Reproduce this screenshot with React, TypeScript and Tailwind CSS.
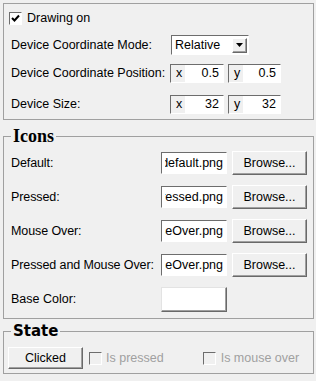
import { FC, ReactNode } from "react";

const sunken =
  "border border-t-[#6d6d6d] border-l-[#6d6d6d] border-b-white border-r-white";
const raised =
  "border border-t-white border-l-white border-b-[#696969] border-r-[#696969] shadow-[inset_-1px_-1px_0_#a0a0a0]";

const CheckBox: FC<{ checked?: boolean; disabled?: boolean }> = ({
  checked,
  disabled,
}) => (
  <div
    className={`w-[13px] h-[13px] flex items-center justify-center ${sunken} ${
      disabled ? "bg-[#f0f0f0]" : "bg-white"
    }`}
  >
    {checked && (
      <svg width="9" height="9" viewBox="0 0 9 9">
        <path d="M1 4 L3.5 6.5 L8 1.5" stroke="#000" strokeWidth="2" fill="none" />
      </svg>
    )}
  </div>
);

const CoordField: FC<{ axis: string; value: string; w: string }> = ({
  axis,
  value,
  w,
}) => (
  <div className={`${w} h-[19px] flex bg-white ${sunken}`}>
    <span className="bg-[#f0f0f0] pl-[5px] pr-[3px] leading-[17px]">{axis}</span>
    <span className="flex-1 text-right pr-[4px] leading-[17px]">{value}</span>
  </div>
);

const Button: FC<{ className?: string; children: ReactNode }> = ({
  className,
  children,
}) => (
  <div
    className={`flex items-center justify-center bg-[#f0f0f0] ${raised} ${className ?? ""}`}
  >
    {children}
  </div>
);

const FileRow: FC<{ label: string; file: string }> = ({ label, file }) => (
  <div className="h-[34px] flex items-center">
    <span className="w-[150px] shrink-0 whitespace-nowrap tracking-[-0.1px]">{label}</span>
    <div className={`w-[66px] h-[22px] shrink-0 bg-white flex justify-end items-center ${sunken}`}>
      <div className="w-[58px] mr-[3px] overflow-hidden flex justify-end whitespace-nowrap">
        <span className="shrink-0">{file}</span>
      </div>
    </div>
    <Button className="ml-[5px] w-[75px] h-[24px]">Browse...</Button>
  </div>
);

export default function App() {
  return (
    <div className="w-[316px] h-[381px] bg-[#f0f0f0] pt-[3px] pl-[3px] pr-[2px] text-[12.5px] text-black font-['Liberation_Sans',Arial,sans-serif]">
      <div className="h-[117px] border border-[#a0a0a0] pl-[7px] flex flex-col">
        <div className="mt-[6px] h-[16px] flex items-center -ml-[2px] gap-[5px]">
          <CheckBox checked />
          <span>Drawing on</span>
        </div>
        <div className="mt-[8px] h-[22px] flex items-center">
          <span className="w-[160px]">Device Coordinate Mode:</span>
          <div className={`w-[78px] h-[20px] bg-white flex items-center ${sunken}`}>
            <span className="flex-1 pl-[3px]">Relative</span>
            <div className={`w-[15px] h-[15px] mr-[1px] flex items-center justify-center bg-[#f0f0f0] ${raised}`}>
              <svg width="7" height="4" viewBox="0 0 7 4">
                <path d="M0 0 H7 L3.5 4 Z" fill="#000" />
              </svg>
            </div>
          </div>
        </div>
        <div className="mt-[7px] h-[21px] flex items-center">
          <span className="w-[159px]">Device Coordinate Position:</span>
          <CoordField axis="x" value="0.5" w="w-[54px]" />
          <div className="w-[4px]" />
          <CoordField axis="y" value="0.5" w="w-[53px]" />
        </div>
        <div className="mt-[10px] h-[21px] flex items-center">
          <span className="w-[159px]">Device Size:</span>
          <CoordField axis="x" value="32" w="w-[54px]" />
          <div className="w-[4px]" />
          <CoordField axis="y" value="32" w="w-[53px]" />
        </div>
      </div>

      <fieldset className="mt-[6px] border border-[#a0a0a0] pb-[2px]">
        <legend className="ml-[7px] px-[2px] h-[20px] leading-[20px] text-[18px] font-bold font-['Liberation_Serif','Times_New_Roman',serif]">
          Icons
        </legend>
        <div className="pl-[7px] flex flex-col">
          <FileRow label="Default:" file="default.png" />
          <FileRow label="Pressed:" file="pressed.png" />
          <FileRow label="Mouse Over:" file="mouseOver.png" />
          <FileRow label="Pressed and Mouse Over:" file="pressedMouseOver.png" />
          <div className="h-[34px] flex items-center">
            <span className="w-[150px]">Base Color:</span>
            <div className="w-[66px] h-[25px] bg-white border border-t-[#e3e3e3] border-l-[#e3e3e3] border-b-[#696969] border-r-[#696969] shadow-[inset_-1px_-1px_0_#a0a0a0]" />
          </div>
        </div>
      </fieldset>

      <fieldset className="mt-[3px] border border-[#a0a0a0] pb-[4px]">
        <legend className="ml-[7px] px-[2px] h-[18px] leading-[18px] text-[15px] font-bold font-['DejaVu_Sans',sans-serif]">
          State
        </legend>
        <div className="pt-[7px] pl-[4px] flex items-center">
          <Button className="w-[75px] h-[22px]">Clicked</Button>
          <div className="ml-[6px] flex items-center gap-[4px] text-[#a0a0a0]">
            <CheckBox disabled />
            <span>Is pressed</span>
          </div>
          <div className="ml-[39px] flex items-center gap-[5px] text-[#a0a0a0]">
            <CheckBox disabled />
            <span>Is mouse over</span>
          </div>
        </div>
      </fieldset>
    </div>
  );
}
